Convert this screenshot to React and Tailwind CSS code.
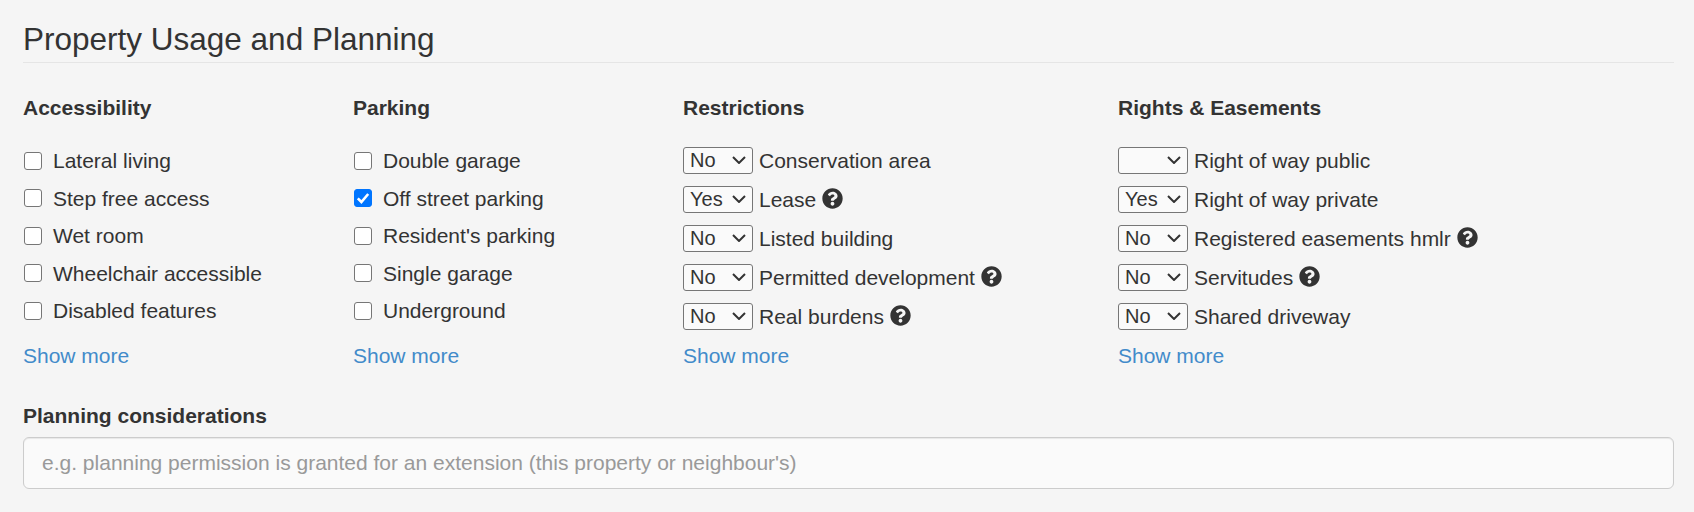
import { FaQuestionCircle } from "react-icons/fa";

const accessibility = [
  { label: "Lateral living" },
  { label: "Step free access" },
  { label: "Wet room" },
  { label: "Wheelchair accessible" },
  { label: "Disabled features" },
];
const parking = [
  { label: "Double garage" },
  { label: "Off street parking", checked: true },
  { label: "Resident's parking" },
  { label: "Single garage" },
  { label: "Underground" },
];
const restrictions = [
  { label: "Conservation area", value: "No" },
  { label: "Lease", value: "Yes", help: true },
  { label: "Listed building", value: "No" },
  { label: "Permitted development", value: "No", help: true },
  { label: "Real burdens", value: "No", help: true },
];
const rights = [
  { label: "Right of way public", value: "" },
  { label: "Right of way private", value: "Yes" },
  { label: "Registered easements hmlr", value: "No", help: true },
  { label: "Servitudes", value: "No", help: true },
  { label: "Shared driveway", value: "No" },
];

function CheckColumn({ title, items }) {
  return (
    <div>
      <h4 className="font-bold leading-[30px] mb-[19px]">{title}</h4>
      <div className="flex flex-col">
        {items.map((item) => (
          <label key={item.label} className="flex items-center h-[37.5px]">
            <span className="relative flex w-[18px] h-[18px] ml-px">
              <input
                type="checkbox"
                defaultChecked={item.checked}
                className="w-[18px] h-[18px] m-0 appearance-none bg-white border-[1.5px] border-[#767676] rounded-[3px] checked:bg-[#0075ff] checked:border-[#0075ff]"
              />
              {item.checked && (
                <svg viewBox="0 0 18 18" className="absolute inset-0 w-[18px] h-[18px]" fill="none" stroke="white" strokeWidth="2.6">
                  <path d="M3.8 9.4 L7.4 13 L14.2 5" />
                </svg>
              )}
            </span>
            <span className="ml-[11px]">{item.label}</span>
          </label>
        ))}
      </div>
      <a href="#" className="block mt-[11px] leading-[30px] text-[#428bca]">Show more</a>
    </div>
  );
}

function SelectColumn({ title, items }) {
  return (
    <div>
      <h4 className="font-bold leading-[30px] mb-[18px]">{title}</h4>
      <div className="flex flex-col">
        {items.map((item) => (
          <div key={item.label} className="flex items-center h-[39px]">
            <div className="relative w-[70px] h-[27px]">
              <select
                defaultValue={item.value}
                className="block w-[70px] h-[27px] pl-[6px] text-[20px] leading-[20px] pb-[2px] appearance-none bg-[#fafafa] border border-[#767676] rounded-[3px]"
              >
                <option value=""></option>
                <option value="No">No</option>
                <option value="Yes">Yes</option>
              </select>
              <svg viewBox="0 0 14 8" className="absolute top-[9px] right-[7px] w-[14px] h-[8px] pointer-events-none" fill="none" stroke="#333333" strokeWidth="2">
                <path d="M1 1 L7 7 L13 1" />
              </svg>
            </div>
            <span className="ml-[6px]">{item.label}</span>
            {item.help && <FaQuestionCircle className="ml-[6px] mb-[3px] text-[21px] text-[#333333]" />}
          </div>
        ))}
      </div>
      <a href="#" className="block mt-[5px] leading-[30px] text-[#428bca]">Show more</a>
    </div>
  );
}

export default function App() {
  return (
    <div className="min-h-[512px] bg-[#f5f5f5] pl-[23px] pr-[20px] pt-[17px] pb-[20px] text-[21px] text-[#333333] font-['Liberation_Sans',Arial,sans-serif]">
      <h3 className="text-[31.5px] leading-[45px] border-b border-[#e5e5e5]">Property Usage and Planning</h3>

      <div className="grid grid-cols-[330px_330px_435px_1fr] mt-[30px]">
        <CheckColumn title="Accessibility" items={accessibility} />
        <CheckColumn title="Parking" items={parking} />
        <SelectColumn title="Restrictions" items={restrictions} />
        <SelectColumn title="Rights & Easements" items={rights} />
      </div>

      <div className="mt-[29.5px]">
        <label className="block font-bold leading-[30px] mb-[6.5px]">Planning considerations</label>
        <input
          type="text"
          placeholder="e.g. planning permission is granted for an extension (this property or neighbour's)"
          className="block w-full h-[51.5px] px-[18px] bg-[#fafafa] border border-[#cccccc] rounded-[6px] placeholder:text-[#999999] shadow-[inset_0_1px_1px_rgba(0,0,0,0.075)]"
        />
      </div>
    </div>
  );
}
